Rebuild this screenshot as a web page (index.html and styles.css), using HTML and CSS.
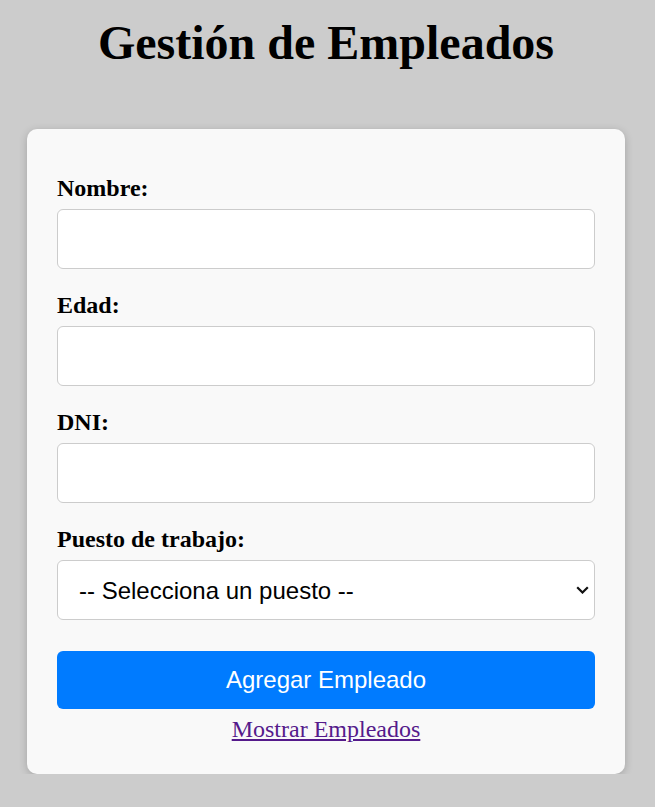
FILE: index.html
```html
<!DOCTYPE html>
<html lang="es">
<head>
<meta charset="utf-8">
<title>Gestión de Empleados</title>
<link rel="stylesheet" href="styles.css">
</head>
<body>
<h1 class="title">Gestión de Empleados</h1>
<div class="card">
  <form class="form">
    <label class="label" for="nombre">Nombre:</label>
    <input class="field" id="nombre" type="text">
    <label class="label" for="edad">Edad:</label>
    <input class="field" id="edad" type="text">
    <label class="label" for="dni">DNI:</label>
    <input class="field" id="dni" type="text">
    <label class="label" for="puesto">Puesto de trabajo:</label>
    <div class="select-wrap">
      <select class="field select" id="puesto">
        <option>-- Selecciona un puesto --</option>
      </select>
      <svg class="chevron" width="13" height="8" viewBox="0 0 13 8" aria-hidden="true">
        <polyline points="1.2,1.2 6.5,6.5 11.8,1.2" fill="none" stroke="#111" stroke-width="2.2"/>
      </svg>
    </div>
    <button class="btn" type="button">Agregar Empleado</button>
  </form>
  <div class="linkrow"><a class="link" href="#">Mostrar Empleados</a></div>
</div>
</body>
</html>
```
FILE: styles.css
```css
html, body {
  margin: 0;
  padding: 0;
}
body {
  background: #cccccc;
  font-family: "Liberation Serif", "Times New Roman", serif;
  padding: 1px 3px 0 0;
}
.title {
  text-align: center;
  font-size: 48px;
  font-weight: bold;
  margin: 16px 0 0;
  line-height: 52px;
}
.card {
  box-sizing: border-box;
  width: 598px;
  margin: 60px auto 0;
  background: #f9f9f9;
  border-radius: 10px;
  box-shadow: 0 2px 8px rgba(0,0,0,0.2);
  padding: 46px 30px 28px;
}
.form {
  display: flex;
  flex-direction: column;
}
.label {
  font-weight: bold;
  font-size: 24px;
  line-height: 27px;
  margin-bottom: 7px;
}
.field {
  box-sizing: border-box;
  width: 100%;
  height: 60px;
  border: 1px solid #cccccc;
  border-radius: 6px;
  background: #fff;
  margin-bottom: 23px;
  font-family: "Liberation Sans", Arial, sans-serif;
  font-size: 24px;
  padding: 0 15px;
}
.select-wrap {
  position: relative;
  margin-bottom: 31px;
}
.select {
  display: block;
  -webkit-appearance: none;
  appearance: none;
  color: #000;
  padding: 0 30px 0 21px;
  margin-bottom: 0;
}
.chevron {
  position: absolute;
  right: 6px;
  top: 26px;
  pointer-events: none;
}
.btn {
  height: 58px;
  background: #007bff;
  color: #fff;
  border: none;
  border-radius: 6px;
  font-family: "Liberation Sans", Arial, sans-serif;
  font-size: 24px;
}
.linkrow {
  text-align: center;
  margin-top: 6px;
  line-height: 28px;
}
.link {
  color: #551a8b;
  font-size: 24px;
}
```
